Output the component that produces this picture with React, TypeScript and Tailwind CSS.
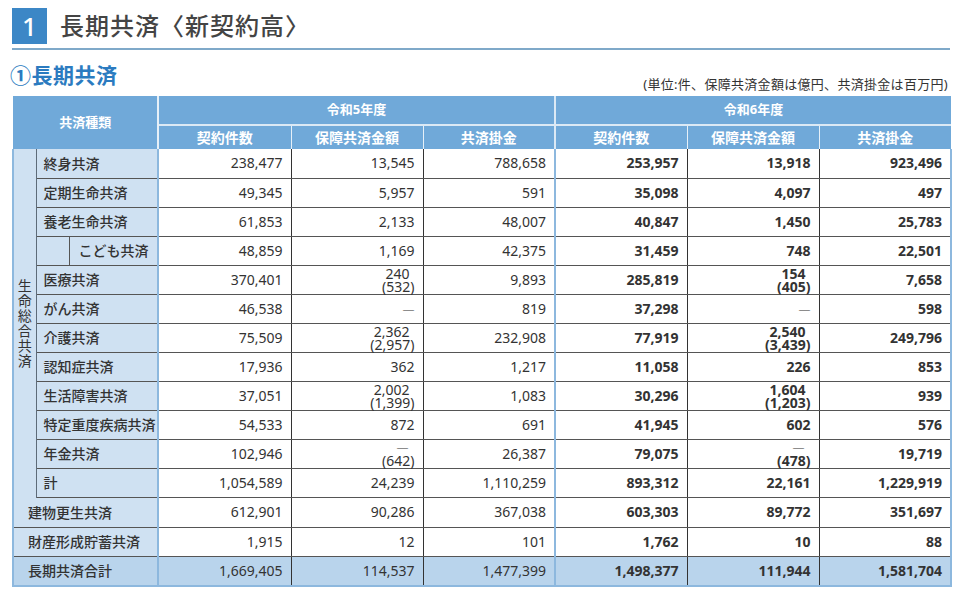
type Val = string | [string, string];

interface Row {
  label: string;
  kind: "life" | "child" | "other" | "total";
  v: Val[];
}

const DASH = "—";

const ROWS: Row[] = [
  { label: "終身共済", kind: "life", v: ["238,477", "13,545", "788,658", "253,957", "13,918", "923,496"] },
  { label: "定期生命共済", kind: "life", v: ["49,345", "5,957", "591", "35,098", "4,097", "497"] },
  { label: "養老生命共済", kind: "life", v: ["61,853", "2,133", "48,007", "40,847", "1,450", "25,783"] },
  { label: "こども共済", kind: "child", v: ["48,859", "1,169", "42,375", "31,459", "748", "22,501"] },
  { label: "医療共済", kind: "life", v: ["370,401", ["240", "(532)"], "9,893", "285,819", ["154", "(405)"], "7,658"] },
  { label: "がん共済", kind: "life", v: ["46,538", DASH, "819", "37,298", DASH, "598"] },
  { label: "介護共済", kind: "life", v: ["75,509", ["2,362", "(2,957)"], "232,908", "77,919", ["2,540", "(3,439)"], "249,796"] },
  { label: "認知症共済", kind: "life", v: ["17,936", "362", "1,217", "11,058", "226", "853"] },
  { label: "生活障害共済", kind: "life", v: ["37,051", ["2,002", "(1,399)"], "1,083", "30,296", ["1,604", "(1,203)"], "939"] },
  { label: "特定重度疾病共済", kind: "life", v: ["54,533", "872", "691", "41,945", "602", "576"] },
  { label: "年金共済", kind: "life", v: ["102,946", [DASH, "(642)"], "26,387", "79,075", [DASH, "(478)"], "19,719"] },
  { label: "計", kind: "life", v: ["1,054,589", "24,239", "1,110,259", "893,312", "22,161", "1,229,919"] },
  { label: "建物更生共済", kind: "other", v: ["612,901", "90,286", "367,038", "603,303", "89,772", "351,697"] },
  { label: "財産形成貯蓄共済", kind: "other", v: ["1,915", "12", "101", "1,762", "10", "88"] },
  { label: "長期共済合計", kind: "total", v: ["1,669,405", "114,537", "1,477,399", "1,498,377", "111,944", "1,581,704"] },
];

const SUB_HEADS = ["契約件数", "保障共済金額", "共済掛金"];

export default function App() {
  return (
    <div
      className="h-[591px] w-[957px] bg-white text-[#333]"
      style={{ fontFamily: '"Noto Sans", "Noto Sans CJK JP", sans-serif' }}
    >
      {/* Title */}
      <div className="ml-[12px] mr-[7px] flex items-center gap-[13px] border-b-2 border-[#7fa9c9] pt-[8px] pb-[4px]">
        <div className="flex h-[36px] w-[35px] items-center justify-center bg-[#3c87c6] text-[26px] leading-none font-medium text-white">
          1
        </div>
        <div className="text-[24px] leading-none font-medium tracking-[1px] text-[#444]">
          長期共済〈新契約高〉
        </div>
      </div>

      <div className="mt-[12px] flex items-end justify-between pr-[9px] pl-[10px]">
        <div className="text-[21px] leading-[26px] font-bold tracking-[0.5px] text-[#2b7bc0]">①長期共済</div>
        <div className="mb-[-3px] text-[13px] leading-none tracking-[0.3px] text-[#333]">
          (単位:件、保障共済金額は億円、共済掛金は百万円)
        </div>
      </div>

      {/* Table */}
      <table className="mt-[8px] ml-[12px] w-[938px] table-fixed border-collapse text-[14px]">
        <colgroup>
          <col className="w-[23px]" />
          <col className="w-[33px]" />
          <col className="w-[89px]" />
          <col className="w-[133px]" />
          <col className="w-[132px]" />
          <col className="w-[132px]" />
          <col className="w-[132px]" />
          <col className="w-[132px]" />
          <col className="w-[132px]" />
        </colgroup>
        <thead>
          <tr className="h-[29px] bg-[#70a9d9] text-white">
            <th
              colSpan={3}
              rowSpan={2}
              className="border-r-2 border-l border-[#e6f0f8] border-l-[#70a9d9] text-[13px] font-bold"
            >
              共済種類
            </th>
            <th colSpan={3} className="border-r-2 border-b-2 border-[#dbe9f5] text-[13px] font-bold">
              令和5年度
            </th>
            <th colSpan={3} className="border-b-2 border-[#dbe9f5] text-[13px] font-bold">
              令和6年度
            </th>
          </tr>
          <tr className="h-[24px] bg-[#70a9d9] text-white">
            {[0, 1].flatMap((y) =>
              SUB_HEADS.map((h, i) => (
                <th
                  key={`${y}-${i}`}
                  className={
                    "text-[14px] font-bold " +
                    (y === 0 && i === 2
                      ? "border-r-2 border-[#dbe9f5]"
                      : y === 1 && i === 2
                        ? ""
                        : "border-r border-[#e6f0f8]")
                  }
                >
                  {h}
                </th>
              ))
            )}
          </tr>
        </thead>
        <tbody>
          {ROWS.map((r, idx) => (
            <tr
              key={r.label}
              className={idx >= 12 ? (idx === 13 ? "h-[29px]" : "h-[30px]") : "h-[29px]"}
            >
              {idx === 0 && (
                <td
                  rowSpan={12}
                  className="border-r border-l-2 border-[#5d6b79] border-l-[#8db8de] bg-[#cfe1f2] p-0 text-center align-middle"
                >
                  <span className="inline-block w-[15px] pt-[2px] text-[14px] leading-[15px] break-all">
                    生命総合共済
                  </span>
                </td>
              )}
              {r.kind === "child" && (
                <td className="border-b border-[#555] bg-[#cfe1f2]" />
              )}
              <LabelCell row={r} />
              {r.v.map((val, i) => (
                <DataCell key={i} val={val} col={i} total={r.kind === "total"} last={idx === ROWS.length - 1} />
              ))}
            </tr>
          ))}
        </tbody>
      </table>
    </div>
  );
}

function LabelCell({ row }: { row: Row }) {
  const bg = row.kind === "total" ? "bg-[#b9d4ec]" : "bg-[#cfe1f2]";
  if (row.kind === "child") {
    return (
      <td className={`border-r-2 border-b border-l border-[#555] border-r-[#8db8de] ${bg} pl-[9px] font-medium whitespace-nowrap`}>
        {row.label}
      </td>
    );
  }
  if (row.kind === "life") {
    return (
      <td
        colSpan={2}
        className={`border-r-2 border-b border-[#555] border-r-[#8db8de] ${bg} pl-[7px] font-medium whitespace-nowrap`}
      >
        {row.label}
      </td>
    );
  }
  return (
    <td
      colSpan={3}
      className={`border-r-2 border-b border-l-2 border-[#555] border-r-[#8db8de] border-l-[#8db8de] ${bg} ${
        row.kind === "total" ? "border-b-2 border-b-[#8db8de]" : ""
      } pl-[14px] font-medium whitespace-nowrap`}
    >
      {row.label}
    </td>
  );
}

function DataCell({ val, col, total, last }: { val: Val; col: number; total: boolean; last: boolean }) {
  const right =
    col === 2 || col === 5 ? "border-r-2 border-r-[#8db8de]" : "border-r border-r-[#333]";
  const bottom = last ? "border-b-2 border-b-[#8db8de]" : "border-b border-b-[#555]";
  const weight = col >= 3 ? "font-bold" : "font-normal";
  const bg = total ? "bg-[#b9d4ec]" : "bg-white";
  return (
    <td className={`${right} ${bottom} ${bg} ${weight} pr-[8px] text-right leading-none`}>
      {Array.isArray(val) ? (
        <div className="flex flex-col items-end text-[14px] leading-[13px]">
          <span className={val[0] === DASH ? "pr-[6px] text-[12px] font-light" : "pr-[5px]"}>{val[0]}</span>
          <span>{val[1]}</span>
        </div>
      ) : val === DASH ? (
        <span className="text-[12px] font-light">{val}</span>
      ) : (
        <span>{val}</span>
      )}
    </td>
  );
}
